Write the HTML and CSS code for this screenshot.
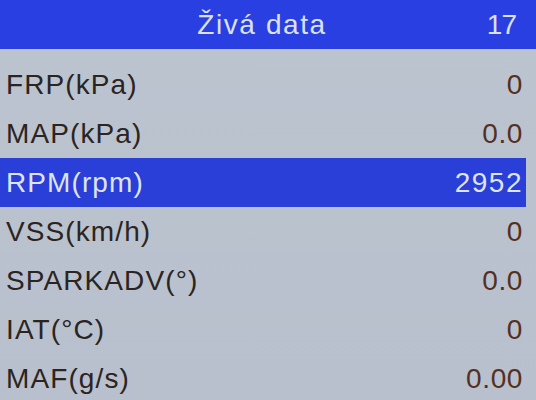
FILE: index.html
```html
<!DOCTYPE html>
<html lang="cs">
<head>
<meta charset="utf-8">
<title>Živá data</title>
<link rel="stylesheet" href="styles.css">
</head>
<body>
<div class="screen">
  <header class="header">
    <span class="spacer"></span>
    <span class="title">Živá data</span>
    <span class="count">17</span>
  </header>
  <ul class="list">
    <li class="row"><span class="label">FRP(kPa)</span><span class="value">0</span></li>
    <li class="row"><span class="label">MAP(kPa)</span><span class="value">0.0</span></li>
    <li class="row selected"><span class="label">RPM(rpm)</span><span class="value">2952</span></li>
    <li class="row"><span class="label">VSS(km/h)</span><span class="value">0</span></li>
    <li class="row"><span class="label">SPARKADV(°)</span><span class="value">0.0</span></li>
    <li class="row"><span class="label">IAT(°C)</span><span class="value">0</span></li>
    <li class="row"><span class="label">MAF(g/s)</span><span class="value">0.00</span></li>
  </ul>
</div>
</body>
</html>
```
FILE: styles.css
```css
html, body {
  margin: 0;
  padding: 0;
  width: 536px;
  height: 400px;
  overflow: hidden;
}
body {
  background: #b9c1cd;
  font-family: "Liberation Sans", Arial, sans-serif;
}
.screen {
  width: 536px;
  height: 400px;
  overflow: hidden;
  background: linear-gradient(180deg, #bcc4d0 0%, #b7c0cc 100%);
}
.header {
  height: 49px;
  background: #2a3fe2;
  display: grid;
  grid-template-columns: 1fr auto 1fr;
  align-items: center;
  padding: 0 12px 0 0;
  color: #d9e1f2;
  font-size: 28px;
  line-height: 49px;
}
.title {
  letter-spacing: 1.6px;
}
.count {
  justify-self: end;
  margin-right: 8px;
  letter-spacing: -1px;
}
.list {
  list-style: none;
  margin: 0;
  padding: 11px 0 0 0;
}
.row {
  height: 49px;
  width: 526px;
  box-sizing: border-box;
  display: flex;
  align-items: center;
  justify-content: space-between;
  padding: 0 3px 0 6px;
  font-size: 28px;
  line-height: 49px;
}
.label {
  color: #2c2422;
  letter-spacing: 1.1px;
}
.value {
  color: #55301f;
  letter-spacing: 0.6px;
}
.selected {
  background: #2a3ed8;
}
.selected .label,
.selected .value {
  color: #dde4f3;
}
.selected .value {
  letter-spacing: 1.5px;
}
```
